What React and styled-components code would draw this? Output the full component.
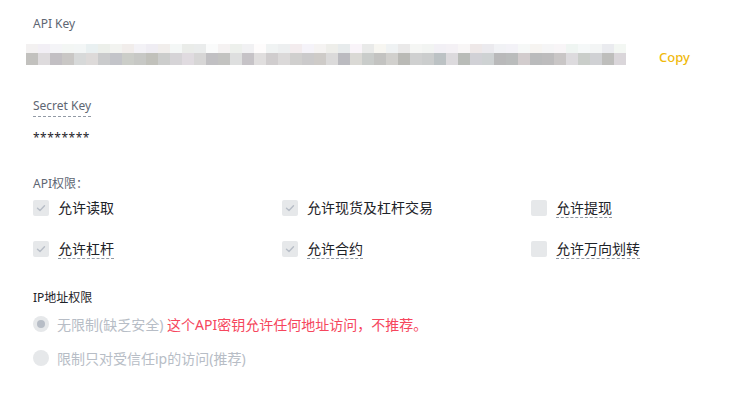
import React from "react";
import styled, { createGlobalStyle } from "styled-components";

const GlobalStyle = createGlobalStyle`
  html, body {
    margin: 0;
    padding: 0;
    background: #fff;
    font-family: "Noto Sans", "Noto Sans CJK SC", sans-serif;
  }
`;

const Page = styled.div`
  width: 732px;
  height: 395px;
  box-sizing: border-box;
  padding: 16px 0 0 33px;
  display: flex;
  flex-direction: column;
  overflow: hidden;
`;

const FieldLabel = styled.div`
  font-size: 12px;
  line-height: 16px;
  color: ${(p) => p.color || "#5E6673"};
  margin-top: ${(p) => p.mt || 0}px;
`;

const Punct = styled.span`
  font-family: "Noto Sans CJK SC", sans-serif;
`;

const KeyRow = styled.div`
  display: flex;
  align-items: flex-end;
  gap: 33px;
  margin: 12px 0 0 -7px;
`;

const Mosaic = styled.div`
  display: grid;
  grid-template-columns: repeat(50, 12px);
  grid-template-rows: 9px 12px;
`;

const Cell = styled.span`
  display: block;
`;

const CopyBtn = styled.span`
  font-size: 13px;
  line-height: 16px;
  color: #F0B90B;
  font-weight: 500;
  cursor: pointer;
`;

const SecretLabel = styled.span`
  align-self: flex-start;
  margin-top: 33px;
  font-size: 12px;
  line-height: 16px;
  color: #5E6673;
  padding-bottom: 2px;
  border-bottom: 1px dashed #929AA5;
`;

const Stars = styled.div`
  margin-top: 13px;
  font-size: 12px;
  line-height: 16px;
  color: #1E2329;
  letter-spacing: 0.5px;
`;

const PermGrid = styled.div`
  display: grid;
  grid-template-columns: 249px 249px auto;
  row-gap: 21px;
  margin-top: 6px;
`;

const CheckItem = styled.label`
  display: flex;
  align-items: center;
  gap: 9px;
  height: 20px;
`;

const Box = styled.span`
  width: 16px;
  height: 16px;
  border-radius: 2px;
  background: #E6E8EA;
  display: flex;
  align-items: center;
  justify-content: center;
  flex: none;
`;

const CheckText = styled.span`
  font-size: 14px;
  line-height: 18px;
  color: #1E2329;
  border-bottom: 1px dashed ${(p) => (p.tip ? "#929AA5" : "transparent")};
`;

const RadioList = styled.div`
  display: flex;
  flex-direction: column;
  gap: 14px;
  margin-top: 8px;
`;

const RadioItem = styled.label`
  display: flex;
  align-items: center;
  gap: 8px;
  height: 20px;
  font-size: 14px;
  color: #B7BDC6;
`;

const Dot = styled.span`
  width: 16px;
  height: 16px;
  border-radius: 50%;
  background: #E6E8EA;
  display: flex;
  align-items: center;
  justify-content: center;
  flex: none;
  &::after {
    content: "";
    width: 8px;
    height: 8px;
    border-radius: 50%;
    background: ${(p) => (p.on ? "#B7BDC6" : "transparent")};
  }
`;

const Warn = styled.span`
  color: #F6465D;
`;

const Check = () => (
  <svg width="10" height="10" viewBox="0 0 10 10" fill="none">
    <path d="M1.5 5.2 L4 7.5 L8.5 2.8" stroke="#B7BDC6" strokeWidth="1.4" strokeLinecap="round" strokeLinejoin="round" />
  </svg>
);

let seed = 7;
const rnd = () => {
  seed = (seed * 9301 + 49297) % 233280;
  return seed / 233280;
};
const tint = (base, spread) => {
  const v = Math.round(base + rnd() * spread);
  const r = v + Math.round((rnd() - 0.5) * 8);
  const g = v + Math.round((rnd() - 0.5) * 6);
  const b = v + Math.round((rnd() - 0.5) * 8);
  return `rgb(${r},${g},${b})`;
};
const topRow = Array.from({ length: 50 }, () => tint(234, 18));
const bottomRow = Array.from({ length: 50 }, () => tint(186, 38));

const perms = [
  { label: "允许读取", checked: true },
  { label: "允许现货及杠杆交易", checked: true },
  { label: "允许提现", tip: true },
  { label: "允许杠杆", checked: true, tip: true },
  { label: "允许合约", checked: true, tip: true },
  { label: "允许万向划转", tip: true },
];

export default function App() {
  return (
    <>
      <GlobalStyle />
      <Page>
        <FieldLabel>API Key</FieldLabel>
        <KeyRow>
          <Mosaic>
            {topRow.map((c, i) => (
              <Cell key={"t" + i} style={{ background: c }} />
            ))}
            {bottomRow.map((c, i) => (
              <Cell key={"b" + i} style={{ background: c }} />
            ))}
          </Mosaic>
          <CopyBtn>Copy</CopyBtn>
        </KeyRow>
        <SecretLabel>Secret Key</SecretLabel>
        <Stars>********</Stars>

        <FieldLabel mt={29}>
          API权限<Punct>：</Punct>
        </FieldLabel>
        <PermGrid>
          {perms.map((p) => (
            <CheckItem key={p.label}>
              <Box>{p.checked && <Check />}</Box>
              <CheckText tip={p.tip}>{p.label}</CheckText>
            </CheckItem>
          ))}
        </PermGrid>

        <FieldLabel mt={31} color="#1E2329">IP地址权限</FieldLabel>
        <RadioList>
          <RadioItem>
            <Dot on />
            <span>
              无限制(缺乏安全){" "}
              <Warn>
                这个API密钥允许任何地址访问<Punct>，</Punct>不推荐。
              </Warn>
            </span>
          </RadioItem>
          <RadioItem>
            <Dot />
            <span>限制只对受信任ip的访问(推荐)</span>
          </RadioItem>
        </RadioList>
      </Page>
    </>
  );
}
